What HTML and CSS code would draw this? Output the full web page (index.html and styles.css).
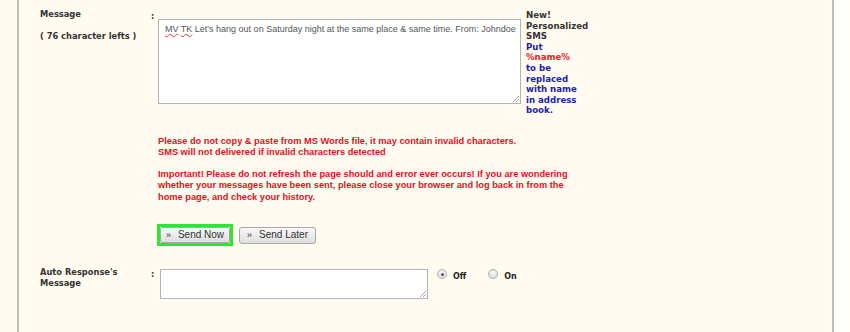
FILE: index.html
```html
<!DOCTYPE html>
<html>
<head>
<meta charset="utf-8">
<link rel="stylesheet" href="styles.css">
</head>
<body>
<div class="page">
  <div class="panel">
    <div class="row row-msg">
      <div class="label">Message<br><br>( 76 character lefts )</div>
      <div class="colon">:</div>
      <div class="field">
        <div class="msg-line">
          <div class="msg-box"><span class="typo">MV</span> <span class="typo">TK</span> Let's hang out on Saturday night at the same place &amp; same time. From: Johndoe</div>
          <div class="note"><span class="dark">New! Personalized SMS</span><br><span class="blue">Put <span class="red">%name%</span> to be replaced with name in address book.</span></div>
        </div>
        <div class="warn">
          <p>Please do not copy &amp; paste from MS Words file, it may contain invalid characters.<br>SMS will not delivered if invalid characters detected</p>
          <p>Important! Please do not refresh the page should and error ever occurs! If you are wondering whether your messages have been sent, please close your browser and log back in from the home page, and check your history.</p>
        </div>
        <div class="buttons">
          <span class="focus"><button class="btn btn-now" type="button"><span class="arr">&raquo;</span>Send Now</button></span>
          <button class="btn btn-later" type="button"><span class="arr">&raquo;</span>Send Later</button>
        </div>
      </div>
    </div>
    <div class="row row-auto">
      <div class="label">Auto Response's<br>Message</div>
      <div class="colon">:</div>
      <div class="field field-auto">
        <div class="auto-box"></div>
        <label class="opt"><span class="radio checked"></span><span class="opt-text">Off</span></label>
        <label class="opt"><span class="radio"></span><span class="opt-text">On</span></label>
      </div>
    </div>
  </div>
</div>
</body>
</html>
```

FILE: styles.css
```css
html, body {
  margin: 0;
  padding: 0;
  background: #fffdf8;
}
.page {
  width: 817px;
  min-height: 332px;
  padding-left: 17px;
  background: #fffbf1;
  display: flex;
}
.panel {
  flex: 1;
  border-left: 2px solid #bdbdbd;
  border-right: 2px solid #bdbdbd;
  padding-left: 21px;
  min-height: 340px;
  box-sizing: border-box;
}
.row {
  display: flex;
  align-items: flex-start;
}
.row-msg {
  padding-top: 9px;
}
.label {
  width: 111px;
  font: bold 8.3px/11px "DejaVu Sans", sans-serif;
  color: #333;
}
.colon {
  width: 7px;
  font: bold 8.3px/11px "DejaVu Sans", sans-serif;
  color: #333;
  padding-top: 2px;
}
.field {
  width: 430px;
}
.msg-line {
  display: flex;
  align-items: flex-start;
  gap: 5px;
}
.msg-box {
  margin-top: 10px;
  width: 363px;
  height: 85px;
  box-sizing: border-box;
  border: 1px solid #b4b4b4;
  background: #fff;
  padding: 4px 6px;
  font: 9px/11px "Liberation Sans", Arial, sans-serif;
  color: #555;
  white-space: nowrap;
  overflow: hidden;
  position: relative;
}
.msg-box::after,
.auto-box::after {
  content: "";
  position: absolute;
  right: 1px;
  bottom: 1px;
  width: 6px;
  height: 6px;
  background: linear-gradient(135deg, transparent 45%, #aaa 45%, #aaa 55%, transparent 55%, transparent 70%, #aaa 70%, #aaa 80%, transparent 80%);
}
.typo {
  text-decoration: underline wavy #e33;
  text-decoration-thickness: 1px;
  text-underline-offset: 1px;
}
.note {
  width: 54px;
  padding-top: 1px;
  font: bold 8.6px/10.6px "DejaVu Sans", sans-serif;
}
.dark { color: #333; }
.blue { color: #1d1dad; }
.red { color: #e8202a; }
.warn {
  margin-top: 20px;
  color: #e2101c;
  font: bold 9.25px/11.5px "Liberation Sans", Arial, sans-serif;
}
.warn p {
  margin: 0 0 10px 0;
}
.warn p:last-child {
  margin-bottom: 0;
}
.buttons {
  margin-top: 21px;
  margin-left: -1px;
  display: flex;
  align-items: center;
  gap: 6px;
}
.focus {
  display: inline-flex;
  border: 3px solid #2fe62f;
}
.btn {
  margin: 0;
  font: 10px/1 "Liberation Sans", Arial, sans-serif;
  color: #333;
  background: linear-gradient(#f8f8f8, #dedede);
  border: 1px solid #a8a8a8;
  border-radius: 2px;
  padding: 0;
  display: inline-flex;
  align-items: center;
  justify-content: center;
  gap: 8px;
}
.btn-now {
  width: 70px;
  height: 16px;
}
.btn-later {
  width: 77px;
  height: 17px;
  border-radius: 3px;
}
.arr {
  font-size: 9px;
  letter-spacing: -1px;
}
.row-auto {
  margin-top: 21px;
}
.field-auto {
  display: flex;
  align-items: flex-start;
  padding-top: 2px;
}
.auto-box {
  margin-left: 2px;
  width: 268px;
  height: 30px;
  box-sizing: border-box;
  border: 1px solid #b4b4b4;
  background: #fff;
  position: relative;
}
.opt {
  display: flex;
  align-items: flex-start;
  margin-left: 9px;
}
.opt + .opt {
  margin-left: 22px;
}
.opt-text {
  font: bold 8px/10px "DejaVu Sans", sans-serif;
  color: #222;
  padding-top: 3px;
}
.radio {
  flex: none;
  width: 10px;
  height: 10px;
  box-sizing: border-box;
  border-radius: 50%;
  border: 1px solid #b0b0b0;
  background: radial-gradient(circle at 50% 35%, #fafafa, #d6d6d6);
  margin-right: 6px;
  position: relative;
}
.radio.checked::after {
  content: "";
  position: absolute;
  left: 2.5px;
  top: 2.5px;
  width: 3px;
  height: 3px;
  border-radius: 50%;
  background: #555;
}
```
